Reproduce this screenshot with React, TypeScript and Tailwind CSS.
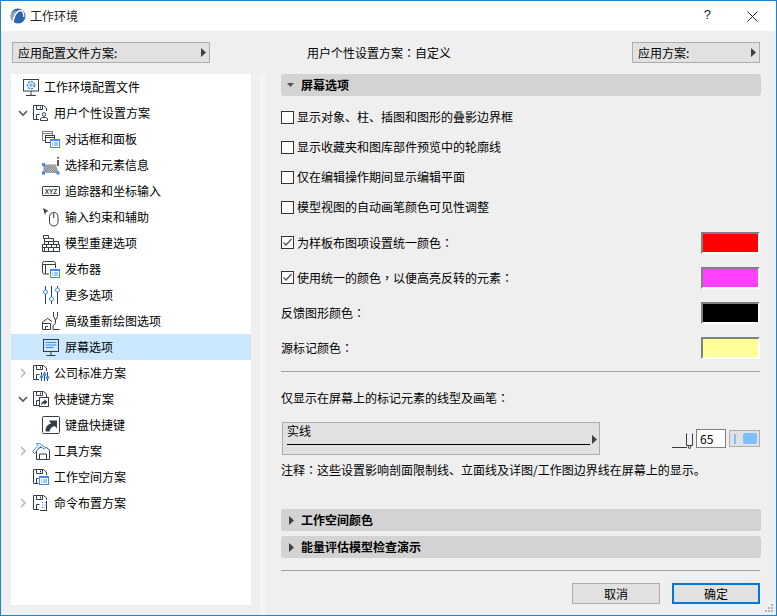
import React from "react";

const DARK = "#353d45";
const BLUE = "#3f8cf0";

// --- Tree icons (20x20 box) ---
const Floppy = ({ children }: { children?: React.ReactNode }) => (
  <svg width="20" height="20" viewBox="0 0 20 20" fill="none" stroke={DARK} strokeWidth="1">
    <path d="M7 16.500H1.500V2.500H11.500L14.500 5V8" />
    <path d="M4.500 2.500V6.500H10.500V2.500M8.500 3.500V5.500" />
    <path d="M4.500 16.500V11.500H7.500" />
    {children}
  </svg>
);

const BlueList = ({ x, y }: { x: number; y: number }) => (
  <g>
    <rect x={x + 0.5} y={y + 0.5} width="9" height="8" fill="#fff" stroke={BLUE} />
    <path d={`M${x + 0.5} ${y + 1.5}h9M${x + 2} ${y + 4}h1M${x + 4} ${y + 4}h4M${x + 2} ${y + 6}h1M${x + 4} ${y + 6}h4`} stroke={BLUE} />
  </g>
);

const ProfileIcon = () => (
  <svg width="20" height="20" viewBox="0 0 20 20" fill="none">
    <rect x="0.500" y="2.500" width="15" height="11.500" stroke={DARK} />
    <path d="M8 14v4M3 18.500h10" stroke={DARK} />
    <circle cx="8" cy="8.200" r="3.500" stroke={BLUE} strokeWidth="1.600" strokeDasharray="2.200 1" />
    <circle cx="8" cy="8.200" r="1.200" stroke={BLUE} />
  </svg>
);

const UserScheme = () => (
  <Floppy>
    <circle cx="12" cy="11.500" r="1.800" fill="#fff" />
    <path d="M8.500 17.500v-2l2-1h3l2 1v2z" fill="#fff" />
  </Floppy>
);

const DialogsIcon = () => (
  <svg width="20" height="20" viewBox="0 0 20 20" fill="none" stroke="#7a8086">
    <rect x="0.500" y="2.500" width="10" height="9" />
    <path d="M0.500 4.500h10" />
    <rect x="3.500" y="6.500" width="9" height="7" fill="#fff" stroke={DARK} />
    <path d="M3.500 8.500h9" stroke={DARK} />
    <BlueList x={8} y={10} />
  </svg>
);

const SelectionIcon = () => (
  <svg width="20" height="20" viewBox="0 0 20 20" fill="none">
    <path d="M1.500 9.500H14L16.500 18H1.500z" fill="#8d9298" />
    <path d="M3 18L11 10M5 18L13 10M7 18L14 11M9 18L15 12M11.500 18L15.500 14M2 13.500L5.500 10M2 16L8 10" stroke="#c4c7ca" strokeWidth="0.700" />
    <path d="M16 2v1.500M16 5v6" stroke="#222" strokeWidth="1.500" />
    <rect x="0" y="8" width="3" height="3" fill={BLUE} />
    <rect x="0" y="16.500" width="3" height="3" fill={BLUE} />
    <rect x="14.500" y="16.500" width="3" height="3" fill={BLUE} />
  </svg>
);

const TrackerIcon = () => (
  <svg width="20" height="20" viewBox="0 0 20 20" fill="none">
    <rect x="0.500" y="5.500" width="17" height="9" rx="0.500" stroke={DARK} />
    <text x="9" y="12.500" fontSize="6.500" fontWeight="700" textAnchor="middle" fill={DARK} stroke="none" fontFamily="Liberation Sans, sans-serif">XYZ</text>
  </svg>
);

const MouseIcon = () => (
  <svg width="20" height="20" viewBox="0 0 20 20" fill="none">
    <path d="M1 1l5.500 3-2.500 1-1 3z" fill={DARK} />
    <rect x="7.500" y="5.500" width="8.500" height="13.500" rx="4.200" stroke={DARK} />
    <path d="M11.700 6v5" stroke={DARK} />
  </svg>
);

const BricksIcon = () => (
  <svg width="20" height="20" viewBox="0 0 20 20" fill="none" stroke={DARK}>
    <path d="M1.500 2.500h5v3h-5zM6.500 5.500h5v3h-9v-3M0.500 11.500h17M0.500 14.500h17M0.500 18.500h17M11.500 8.500h5v3M2.500 8.500v3M6.500 8.500v3M11.500 8.500v3M0.500 11.500v7M17.500 11.500v7M4.500 11.500v3M9.500 11.500v3M14.500 11.500v3M2.500 14.500v4M6.500 14.500v4M11.500 14.500v4" />
  </svg>
);

const PublisherIcon = () => (
  <svg width="20" height="20" viewBox="0 0 20 20" fill="none" stroke={DARK}>
    <rect x="0.500" y="2.500" width="13" height="12.500" rx="2" />
    <path d="M0.500 5.500h13M3.500 5.500v9.500" />
    <rect x="7" y="9" width="11" height="10" fill="#fff" stroke="none" />
    <BlueList x={8} y={10} />
  </svg>
);

const SlidersIcon = () => (
  <svg width="20" height="20" viewBox="0 0 20 20" fill="none" stroke={DARK}>
    <path d="M3.500 1v4M3.500 9v10M9.500 1v11M9.500 16v3M15.500 1v2M15.500 7v12" />
    <circle cx="3.500" cy="7" r="2" stroke={BLUE} />
    <circle cx="9.500" cy="14" r="2" stroke={BLUE} />
    <circle cx="15.500" cy="5" r="2" stroke={BLUE} />
  </svg>
);

const RedrawIcon = () => (
  <svg width="20" height="20" viewBox="0 0 20 20" fill="none" stroke={DARK}>
    <path d="M0.500 18.500V11L5.500 7.500L10 10.500" />
    <path d="M0.500 12.500H8.500V18.500H0.500M3.500 18.500V15.500H6" />
    <path d="M11.500 1v4.500l2 3.500 2-3.500V1M13.500 9v3.500L11 14.500v4H17.500" />
  </svg>
);

const ScreenIcon = () => (
  <svg width="20" height="20" viewBox="0 0 20 20" fill="none" stroke={DARK}>
    <rect x="1.500" y="2.500" width="15" height="12" />
    <path d="M3.500 5.500h11M3.500 8h11M3.500 10.500h8" stroke={BLUE} />
    <path d="M9 15v3M4.500 18.500h9" />
  </svg>
);

const CompanyIcon = () => (
  <Floppy>
    <path d="M9.500 9v9M12.500 9v9M15.500 9v9" stroke={DARK} />
    <circle cx="9.500" cy="14" r="1.300" fill={BLUE} stroke={BLUE} />
    <circle cx="12.500" cy="11.500" r="1.300" fill={BLUE} stroke={BLUE} />
    <circle cx="15.500" cy="14.500" r="1.300" fill={BLUE} stroke={BLUE} />
  </Floppy>
);

const ShortcutScheme = () => (
  <Floppy>
    <rect x="7.500" y="8.500" width="9" height="9" fill="#fff" stroke={DARK} />
    <path d="M9 16.500c0-3 1.500-4.500 3.500-4.500V10l3 3-3 3v-1.500c-1.500 0-2.500.5-3.500 2z" fill={DARK} stroke="none" />
  </Floppy>
);

const KeyboardIcon = () => (
  <svg width="20" height="20" viewBox="0 0 20 20" fill="none">
    <rect x="0.500" y="1.500" width="17" height="17" rx="1" stroke={DARK} />
    <path d="M3.500 16.500C3.500 12 5.500 9.500 9 8.500L7 5.500H15V13.500L12.500 11C10 11.500 8 13.500 7.500 16.500z" fill={DARK} />
  </svg>
);

const ToolsIcon = () => (
  <svg width="20" height="20" viewBox="0 0 20 20" fill="none">
    <path d="M4.500 18.500V9.500L8 6.500H14.500L17.500 9V18.500zM7.500 18.500V13h7v5.500" stroke={DARK} />
    <path d="M0.500 10.500L6 4.500 4.500 2.500H7.500L13.500 6.500 12.500 8 8 5.500 2.500 12.500z" fill="#fff" stroke={BLUE} />
  </svg>
);

const WorkspaceIcon = () => (
  <Floppy>
    <rect x="6.500" y="8" width="11" height="11" fill="#fff" stroke="none" />
    <BlueList x={7} y={9} />
  </Floppy>
);

const CommandIcon = () => (
  <Floppy>
    <rect x="8" y="7" width="10" height="12" fill="#fff" stroke="none" />
    <path d="M14.500 8v10M8 17.500h6.500" stroke={DARK} />
    <path d="M10 9.500h1M12.500 9.500h1M10 12h1M12.500 12h1M10 14.500h1M12.500 14.500h1" stroke={BLUE} />
  </Floppy>
);

// --- Small triangles ---
const TriRight = () => (
  <svg width="5" height="9" viewBox="0 0 5 9"><path d="M0 0l5 4.500L0 9z" fill="#404040" /></svg>
);
const TriDown = () => (
  <svg width="7" height="4" viewBox="0 0 7 4"><path d="M0 0h7L3.500 4z" fill="#505050" /></svg>
);

const Chevron = ({ open }: { open: boolean }) => (
  <svg width="10" height="10" viewBox="0 0 10 10" fill="none" stroke={open ? "#555" : "#b8b8b8"} strokeWidth="1.600">
    {open ? <path d="M1 3l4 4 4-4" /> : <path d="M3 1l4 4-4 4" />}
  </svg>
);

// full-width colon and comma sit centred in the cell in the original, TC glyphs do that
const Zh = ({ text }: { text: string }) => (
  <>
    {text.split(/([：，])/).map((part, i) =>
      part === "：" || part === "，" ? (
        <span key={i} className="font-['Noto_Sans_CJK_TC',sans-serif]">{part}</span>
      ) : (
        part
      )
    )}
  </>
);

type Row = {
  label: string;
  icon: React.ReactNode;
  indent: string;
  chevron?: "open" | "closed";
  selected?: boolean;
};

const L0 = "pl-[7px] gap-[1px]";
const L1 = "pl-[31px] gap-[2px]";

const rows: Row[] = [
  { label: "工作环境配置文件", icon: <ProfileIcon />, indent: "pl-[12px] gap-0" },
  { label: "用户个性设置方案", icon: <UserScheme />, indent: L0, chevron: "open" },
  { label: "对话框和面板", icon: <DialogsIcon />, indent: L1 },
  { label: "选择和元素信息", icon: <SelectionIcon />, indent: L1 },
  { label: "追踪器和坐标输入", icon: <TrackerIcon />, indent: L1 },
  { label: "输入约束和辅助", icon: <MouseIcon />, indent: L1 },
  { label: "模型重建选项", icon: <BricksIcon />, indent: L1 },
  { label: "发布器", icon: <PublisherIcon />, indent: L1 },
  { label: "更多选项", icon: <SlidersIcon />, indent: L1 },
  { label: "高级重新绘图选项", icon: <RedrawIcon />, indent: L1 },
  { label: "屏幕选项", icon: <ScreenIcon />, indent: L1, selected: true },
  { label: "公司标准方案", icon: <CompanyIcon />, indent: L0, chevron: "closed" },
  { label: "快捷键方案", icon: <ShortcutScheme />, indent: L0, chevron: "open" },
  { label: "键盘快捷键", icon: <KeyboardIcon />, indent: L1 },
  { label: "工具方案", icon: <ToolsIcon />, indent: L0, chevron: "closed" },
  { label: "工作空间方案", icon: <WorkspaceIcon />, indent: "pl-[21px] gap-[1px]" },
  { label: "命令布置方案", icon: <CommandIcon />, indent: L0, chevron: "closed" },
];

const TreeRow = ({ row }: { row: Row }) => (
  <div className={`flex h-[26px] items-center text-black ${row.indent} ${row.selected ? "bg-[#cce8ff]" : ""}`}>
    {row.chevron && (
      <span className="mr-[1px] flex w-[12px] items-center justify-start">
        <Chevron open={row.chevron === "open"} />
      </span>
    )}
    <span className="flex h-[20px] w-[20px] shrink-0 items-center justify-center">{row.icon}</span>
    <span className="ml-[1px] whitespace-nowrap">{row.label}</span>
  </div>
);

const PopupButton = ({ label, width }: { label: string; width: string }) => (
  <div className={`flex h-[21px] items-center justify-between border border-[#adadad] bg-[#e1e1e1] pl-[5px] pr-[3px] text-black ${width}`}>
    <span>{label}</span>
    <TriRight />
  </div>
);

const CheckBox = ({ checked }: { checked?: boolean }) => (
  <span className="flex h-[13px] w-[13px] shrink-0 items-center justify-center border border-[#333] bg-white">
    {checked && (
      <svg width="11" height="11" viewBox="0 0 11 11" fill="none" stroke="#555" strokeWidth="1.300">
        <path d="M1.500 5.500l2.500 2.500 5.500-6" />
      </svg>
    )}
  </span>
);

const CheckRow = ({ label }: { label: string }) => (
  <div className="flex h-[30px] items-center">
    <CheckBox />
    <span className="ml-[3px] whitespace-nowrap text-black">{label}</span>
  </div>
);

const SectionHeader = ({ label, open }: { label: string; open?: boolean }) => (
  <div className="flex h-[22px] items-center rounded-[3px] bg-[#d3d3d3] pl-[6px] font-bold text-black">
    <span className="flex w-[14px] items-center justify-start">
      {open ? <TriDown /> : <span className="ml-[2px] flex"><TriRight /></span>}
    </span>
    <span>{label}</span>
  </div>
);

const ColorRow = ({ label, checked, color }: { label: string; checked?: boolean; color: string }) => (
  <div className="flex h-[35px] items-center justify-between pr-[1px]">
    <div className="flex items-center">
      {checked && (
        <span className="mr-[3px]">
          <CheckBox checked />
        </span>
      )}
      <span className="whitespace-nowrap text-black"><Zh text={label} /></span>
    </div>
    <span className={`h-[22px] w-[59px] border-2 border-b-white border-l-[#808080] border-r-white border-t-[#808080] ${color}`} />
  </div>
);

export default function App() {
  return (
    <div className="relative flex h-[616px] w-[777px] flex-col border border-[#1883d7] bg-[#efefef] font-['Noto_Sans_CJK_SC','Liberation_Sans',sans-serif] text-[12px] leading-[16px]">
      {/* --- Title bar --- */}
      <div className="flex h-[30px] shrink-0 items-center bg-white pl-[9px]">
        <svg width="16" height="16" viewBox="0 0 16 16" className="-mt-[1px] shrink-0">
          <circle cx="8" cy="8" r="7.500" fill="#2f62ad" />
          <path d="M0.500 8a7.500 7.500 0 0 0 4 6.600C3.500 11 4 6 7 3 3 3 .8 5 .5 8z" fill="#8ea6c8" />
          <path d="M3 14.500C3.500 8 7 2.500 10.500 2.500c2.500 0 3.500 3 3.200 6.500" fill="none" stroke="#fff" strokeWidth="1.400" />
        </svg>
        <span className="ml-[4px] text-[#222]">工作环境</span>
        <span className="ml-auto mr-[36px] -mt-[2px] font-['Liberation_Sans',sans-serif] text-[13px] text-[#222]">?</span>
        <svg width="11" height="11" viewBox="0 0 11 11" className="mr-[18px]" fill="none" stroke="#222">
          <path d="M0.500 0.500l10 10M10.500 0.500l-10 10" />
        </svg>
      </div>

      {/* --- Scheme buttons --- */}
      <div className="mt-[11px] flex shrink-0 items-center pl-[11px] pr-[16px]">
        <PopupButton label="应用配置文件方案:" width="w-[198px]" />
        <span className="ml-[97px] whitespace-nowrap text-black"><Zh text="用户个性设置方案：自定义" /></span>
        <div className="ml-auto">
          <PopupButton label="应用方案:" width="w-[128px]" />
        </div>
      </div>

      <div className="mt-[11px] flex min-h-0 flex-1">
        {/* --- Tree --- */}
        <div className="ml-[10px] h-[531px] w-[240px] shrink-0 bg-white">
          {rows.map((row) => (
            <TreeRow key={row.label} row={row} />
          ))}
        </div>

        <div className="ml-[9px] w-[6px] shrink-0 bg-[#f5f5f5]" />

        {/* --- Options panel --- */}
        <div className="ml-[15px] flex w-[480px] flex-col">
          <SectionHeader label="屏幕选项" open />
          <div className="mt-[6px]">
            <CheckRow label="显示对象、柱、插图和图形的叠影边界框" />
            <CheckRow label="显示收藏夹和图库部件预览中的轮廓线" />
            <CheckRow label="仅在编辑操作期间显示编辑平面" />
            <CheckRow label="模型视图的自动画笔颜色可见性调整" />
          </div>
          <div className="mt-[3px]">
            <ColorRow label="为样板布图项设置统一颜色：" checked color="bg-[#ff0000]" />
            <ColorRow label="使用统一的颜色，以便高亮反转的元素：" checked color="bg-[#ff40ff]" />
            <ColorRow label="反馈图形颜色：" color="bg-[#000000]" />
            <ColorRow label="源标记颜色：" color="bg-[#ffff99]" />
          </div>
          <div className="mt-[6px] h-px w-[479px] bg-[#a0a0a0]" />
          <div className="mt-[18px] text-black"><Zh text="仅显示在屏幕上的标记元素的线型及画笔：" /></div>

          <div className="mt-[16px] flex items-center">
            <div className="ml-[1px] flex h-[33px] w-[318px] border border-[#adadad] bg-[#e1e1e1] pl-[4px] pr-[2px] pt-[1px]">
              <div className="w-[304px]">
                <div className="leading-[14px] text-black">实线</div>
                <div className="mt-[6px] h-[1px] bg-black" />
              </div>
              <span className="ml-[2px] flex self-center"><TriRight /></span>
            </div>
            <svg width="22" height="20" viewBox="0 0 22 20" className="ml-[72px]" fill="none" stroke={DARK}>
              <path d="M0 18.500h15" />
              <path d="M14.500 4.500V16.500H20.500V4.500" />
              <path d="M16 17l1.500 3 1.500-3" />
            </svg>
            <div className="ml-[2px] flex h-[19px] w-[30px] items-center border border-[#808080] bg-white pl-[3px] text-black">65</div>
            <div className="ml-[3px] flex h-[17px] w-[31px] items-center border border-[#adadad] bg-[#e1e1e1] pl-[4px]">
              <span className="h-[10px] w-[2px] bg-[#80bfff]" />
              <span className="ml-[7px] h-[11px] w-[14px] rounded-[2px] bg-[#80bfff]" />
            </div>
          </div>

          <div className="mt-[7px] whitespace-nowrap text-black"><Zh text="注释：这些设置影响剖面限制线、立面线及详图/工作图边界线在屏幕上的显示。" /></div>

          <div className="mt-[31px]">
            <SectionHeader label="工作空间颜色" />
          </div>
          <div className="mt-[5px]">
            <SectionHeader label="能量评估模型检查演示" />
          </div>
          <div className="mt-[12px] h-px w-[479px] bg-[#a0a0a0]" />

          <div className="mt-[12px] flex justify-end gap-[12px] pr-[1px]">
            <div className="flex h-[21px] w-[88px] items-center justify-center border border-[#adadad] bg-[#e1e1e1] text-black">取消</div>
            <div className="flex h-[21px] w-[88px] items-center justify-center border-2 border-[#0078d7] bg-[#e1e1e1] text-black">确定</div>
          </div>
        </div>
      </div>

      {/* --- Resize grip --- */}
      <svg width="9" height="9" viewBox="0 0 9 9" className="absolute bottom-[2px] right-[2px]" fill="#b4b4b4">
        <rect x="6" y="0" width="2" height="2" />
        <rect x="3" y="3" width="2" height="2" />
        <rect x="6" y="3" width="2" height="2" />
        <rect x="0" y="6" width="2" height="2" />
        <rect x="3" y="6" width="2" height="2" />
        <rect x="6" y="6" width="2" height="2" />
      </svg>
    </div>
  );
}
